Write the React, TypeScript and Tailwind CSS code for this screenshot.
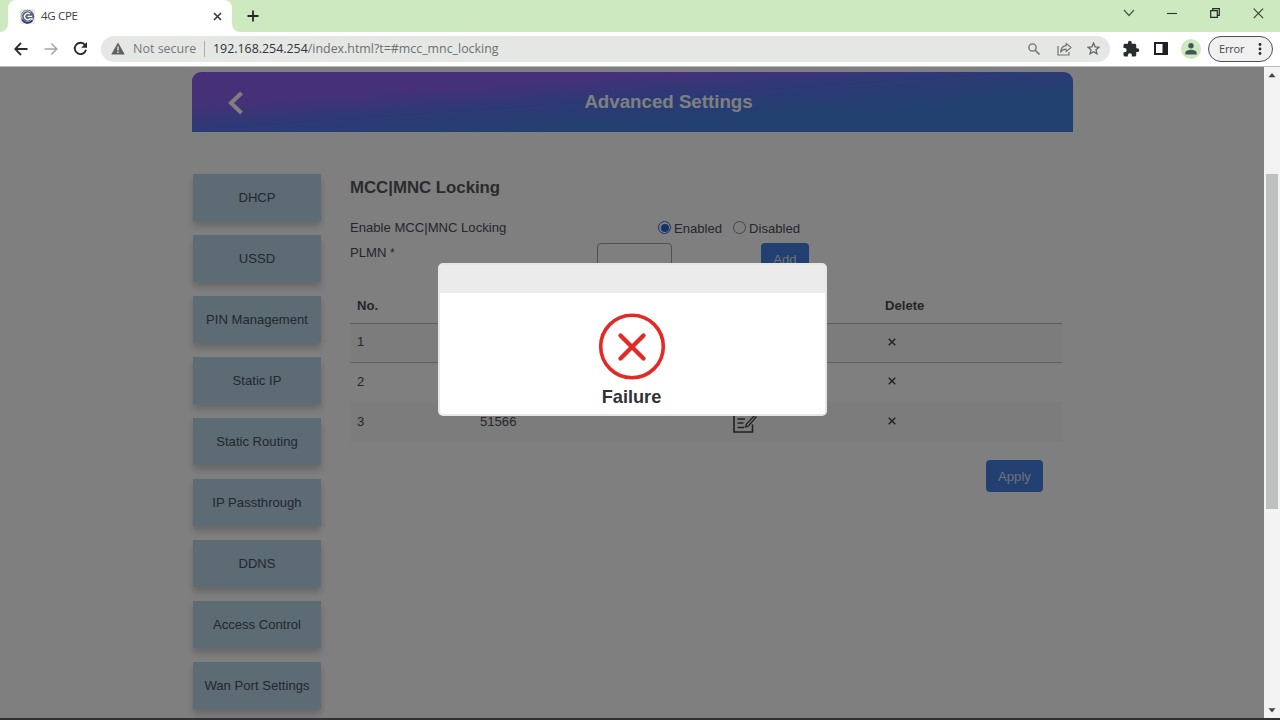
import type { ReactNode } from 'react';

// --- TYPES ---
type MenuItem = {
  label: string;
};

type PlmnRow = {
  no: number;
  plmn: string | null;
};

// --- DATA ---
const menu: MenuItem[] = [
  { label: 'DHCP' },
  { label: 'USSD' },
  { label: 'PIN Management' },
  { label: 'Static IP' },
  { label: 'Static Routing' },
  { label: 'IP Passthrough' },
  { label: 'DDNS' },
  { label: 'Access Control' },
  { label: 'Wan Port Settings' },
];

const rows: PlmnRow[] = [
  { no: 1, plmn: null },
  { no: 2, plmn: null },
  { no: 3, plmn: '51566' },
];

// --- BROWSER ---
function TabBar() {
  return (
    <div className="flex h-8 items-stretch bg-[#cce9c0]">
      <div className="flex w-2 bg-white">
        <div className="w-2 rounded-br-lg bg-[#cce9c0]" />
      </div>
      <div className="flex w-[224px] items-center rounded-t-lg bg-white pl-3 pr-[10px]">
        <svg width="15" height="15" viewBox="0 0 15 15" className="shrink-0">
          <rect width="15" height="15" rx="2" fill="#e6e8ec" />
          <circle cx="7.5" cy="7.5" r="6.7" fill="#5d677c" />
          <path d="M10.8 3.2A5.6 5.6 0 1 0 12.6 9" fill="none" stroke="#c9ced8" strokeWidth="1" />
          <path d="M9.7 5A3.2 3.2 0 1 0 10 9.8H12.5M7.5 7.3h4.6" fill="none" stroke="#ffffff" strokeWidth="1.3" />
          <path d="M2 10.5A6.2 6.2 0 0 0 12.4 11.5" fill="none" stroke="#273b70" strokeWidth="1.6" />
        </svg>
        <span className="ml-[6px] font-['Open_Sans',sans-serif] text-[11.5px] tracking-[-0.3px] text-[#3c4043]">4G CPE</span>
        <svg width="9" height="9" viewBox="0 0 9 9" className="ml-auto">
          <path d="M1 1l7 7M8 1L1 8" stroke="#3a3d40" strokeWidth="1.7" />
        </svg>
      </div>
      <div className="flex w-2 bg-white">
        <div className="w-2 rounded-bl-lg bg-[#cce9c0]" />
      </div>
      <svg width="12" height="12" viewBox="0 0 12 12" className="ml-[7px] mt-[10px]">
        <path d="M6 .5v11M.5 6h11" stroke="#26292b" strokeWidth="1.8" />
      </svg>
      <div className="ml-auto flex items-start pr-[16px] pt-[8px]">
        <svg width="12" height="10" viewBox="0 0 12 10" className="mr-[32px]">
          <path d="M1 2l5 5.5L11 2" fill="none" stroke="#4c574a" strokeWidth="1.2" />
        </svg>
        <svg width="10" height="10" viewBox="0 0 10 10" className="mr-[33px]">
          <path d="M0 5.5h10" stroke="#303530" strokeWidth="1.1" />
        </svg>
        <svg width="10" height="10" viewBox="0 0 10 10" className="mr-[33px]">
          <path d="M.7 2.7h6.6v6.6H.7zM2.7 2.5V.7h6.6v6.6H7.5" fill="none" stroke="#252a24" strokeWidth="1.2" />
        </svg>
        <svg width="11" height="11" viewBox="0 0 11 11">
          <path d="M.7.7l9.4 9.4M10.1.7L.7 10.1" stroke="#3c443a" strokeWidth="1.2" />
        </svg>
      </div>
    </div>
  );
}

function Toolbar() {
  return (
    <div className="flex h-[34px] items-center bg-white font-['Open_Sans',sans-serif]">
      <svg width="14" height="14" viewBox="0 0 14 14" className="ml-[14px]">
        <path d="M13.5 7H1.3M7 1L1.2 7 7 13" fill="none" stroke="#292c2e" strokeWidth="1.8" />
      </svg>
      <svg width="14" height="14" viewBox="0 0 14 14" className="ml-[16px]">
        <path d="M.5 7h12.2M7.4 1.4L12.8 7l-5.4 5.6" fill="none" stroke="#a2a5a6" strokeWidth="1.5" />
      </svg>
      <svg width="15" height="15" viewBox="0 0 15 15" className="mb-px ml-[15px]">
        <path d="M12.2 4.2A5.7 5.7 0 1 0 13 8.8" fill="none" stroke="#292c2e" strokeWidth="1.9" />
        <path d="M14 .9v5.8H8.2z" fill="#292c2e" />
      </svg>
      <div className="ml-[13px] flex h-[26px] w-[1009px] items-center rounded-full bg-[#e5e7e5] pl-[10px] pr-[10px]">
        <svg width="14" height="13" viewBox="0 0 14 13" className="mb-px">
          <path d="M7 .5l6.8 12H.2z" fill="#5c6263" />
          <path d="M7 4.5v4M7 9.4v1.6" stroke="#e5e7e5" strokeWidth="1.4" />
        </svg>
        <span className="ml-[8px] w-[63px] whitespace-nowrap text-[12.5px] text-[#75797a]">Not secure</span>
        <span className="ml-[8px] h-4 w-px bg-[#a9adab]" />
        <span className="ml-[8px] whitespace-nowrap text-[12.4px] text-[#6c706f]">
          <span className="text-[#303335]">192.168.254.254</span>/index.html?t=#mcc_mnc_locking
        </span>
        <div className="ml-auto flex items-center pb-px">
          <svg width="12" height="12" viewBox="0 0 12 12" className="mr-[17px]">
            <circle cx="4.5" cy="4.5" r="3.6" fill="none" stroke="#70766f" strokeWidth="1.4" />
            <path d="M7.2 7.2l4.3 4.3" stroke="#70766f" strokeWidth="1.6" />
          </svg>
          <svg width="15" height="14" viewBox="0 0 15 14" className="mr-[15px]">
            <path d="M1 4v9h11v-3" fill="none" stroke="#70766f" strokeWidth="1.2" />
            <path d="M9.2 1.4L14 5.5 9.2 9.6V7.2C6.6 7.2 5 8 3.7 10c.2-3.4 2-6 5.5-6.3z" fill="none" stroke="#70766f" strokeWidth="1.2" strokeLinejoin="round" />
          </svg>
          <svg width="13" height="13" viewBox="0 0 14 14">
            <path d="M7 1.2l1.7 4 4.3.4-3.3 2.8 1 4.3L7 10.4l-3.7 2.3 1-4.3L1 5.6l4.3-.4z" fill="none" stroke="#626762" strokeWidth="1.4" />
          </svg>
        </div>
      </div>
      <svg width="18" height="18" viewBox="0 0 24 24" className="ml-[12px]">
        <path d="M20.5 11H19V7c0-1.1-.9-2-2-2h-4V3.5a2.5 2.5 0 0 0-5 0V5H4c-1.1 0-2 .9-2 2v3.8h1.5a2.7 2.7 0 0 1 0 5.4H2V20c0 1.1.9 2 2 2h3.8v-1.5a2.7 2.7 0 0 1 5.4 0V22H17c1.1 0 2-.9 2-2v-4h1.5a2.5 2.5 0 0 0 0-5z" fill="#292c2e" />
      </svg>
      <svg width="14" height="13" viewBox="0 0 14 13" className="mb-px ml-[14px]">
        <rect x="1" y="1" width="12" height="11" fill="none" stroke="#1f2223" strokeWidth="2" />
        <rect x="8.5" y="1" width="4.5" height="11" fill="#1f2223" />
      </svg>
      <svg width="20" height="20" viewBox="0 0 20 20" className="ml-[13px]">
        <circle cx="10" cy="10" r="10" fill="#cce9c0" />
        <circle cx="10" cy="6.8" r="2.7" fill="#45545d" />
        <path d="M4.3 15.5v-1.7c0-2 3.4-3.1 5.7-3.1s5.7 1.1 5.7 3.1v1.700z" fill="#45545d" />
      </svg>
      <div className="ml-[7px] flex h-[26px] w-[65px] items-center rounded-full border-[1.5px] border-[#4c5052] bg-[#eff0ef] pl-[10px]">
        <span className="text-[11px] tracking-[-0.2px] text-[#45494b]">Error</span>
        <svg width="4" height="14" viewBox="0 0 4 14" className="ml-auto mr-[10px]">
          <circle cx="2" cy="2.5" r="1.4" fill="#292c2e" />
          <circle cx="2" cy="7" r="1.4" fill="#292c2e" />
          <circle cx="2" cy="11.5" r="1.4" fill="#292c2e" />
        </svg>
      </div>
    </div>
  );
}

function Scrollbar() {
  return (
    <div className="flex w-4 flex-col items-center bg-[#f3f3f3]">
      <svg width="8" height="5" viewBox="0 0 8 5" className="mt-[6px]">
        <path d="M4 0l3.5 4.2h-7z" fill="#454545" />
      </svg>
      <div className="mt-[96px] h-[335px] w-[12px] bg-[#bdc0be]" />
      <svg width="8" height="5" viewBox="0 0 8 5" className="mb-[5px] mt-auto">
        <path d="M4 4.5L.5.3h7z" fill="#454545" />
      </svg>
    </div>
  );
}

// --- PAGE ---
function Radio({ checked, children }: { checked?: boolean; children: ReactNode }) {
  return (
    <label className="flex items-center">
      <span
        className={
          checked
            ? 'mb-px flex size-[13px] items-center justify-center rounded-full border border-[#2a66d6] bg-white'
            : 'mb-px size-[13px] rounded-full border border-[#888888] bg-white'
        }
      >
        {checked && <span className="size-[8px] rounded-full bg-[#2a66d6]" />}
      </span>
      <span className="ml-[3px] mt-[2px]">{children}</span>
    </label>
  );
}

function EditIcon() {
  return (
    <svg width="24" height="22" viewBox="0 0 24 22" fill="none" stroke="#3f4347" strokeWidth="1.6">
      <path d="M14 3H1v18h18.5v-7.5" />
      <path d="M4.5 8H12M4.5 12h6M4.5 16.5H11" />
      <path d="M22.5 3.5l-9 9.5-1 3 3-1 8-9.5" strokeWidth="1.3" />
    </svg>
  );
}

function LockingForm() {
  return (
    <div className="ml-[29px] w-[712px]">
      <h2 className="mt-[3px] text-[16.8px] font-bold leading-[22px] text-[#55575b]">MCC|MNC Locking</h2>

      <div className="mt-[16px] flex h-[28px]">
        <div className="w-[308px] pt-[5px] leading-4">Enable MCC|MNC Locking</div>
        <div className="flex h-[26px] items-center gap-[11px] leading-4">
          <Radio checked>Enabled</Radio>
          <Radio>Disabled</Radio>
        </div>
      </div>
      <div className="flex h-[45px]">
        <div className="w-[247px] pt-[2px] leading-4">
          PLMN <span className="text-[12px]">*</span>
        </div>
        <div className="h-[32px] w-[75px] rounded-sm border border-[#a0a0a0] bg-white" />
        <button className="ml-[89px] h-[32px] w-[48px] rounded bg-[#4280e2] pt-px text-[#dfe3ea]">Add</button>
      </div>

      <table className="w-full table-fixed border-collapse text-left">
        <colgroup>
          <col className="w-[122px]" />
          <col className="w-[254px]" />
          <col className="w-[152px]" />
          <col />
        </colgroup>
        <thead>
          <tr className="h-[35px] border-b border-[#b4b6b4] text-[#4b4d51]">
            <th className="pl-[7px] pt-[2px] font-bold">No.</th>
            <th />
            <th />
            <th className="pl-[7px] pt-[2px] font-bold">Delete</th>
          </tr>
        </thead>
        <tbody>
          {rows.map((row) => (
            <tr key={row.no} className="h-[39.6px] border-b border-transparent odd:bg-[#f8f9f8] first:border-[#bec0be]">
              <td className="pb-px pl-[7px]">{row.no}</td>
              <td className="pb-px pl-[8px]">{row.plmn}</td>
              <td className="pl-[7px]">{row.plmn && <EditIcon />}</td>
              <td className="pb-[2px] pl-[10px]">
                <svg width="8" height="8" viewBox="0 0 8 8">
                  <path d="M.7.7l6.6 6.6M7.3.7L.7 7.3" stroke="#44474b" strokeWidth="1.5" />
                </svg>
              </td>
            </tr>
          ))}
        </tbody>
      </table>

      <button className="ml-[636px] mt-[18px] h-[32px] w-[57px] rounded bg-[#4280e2] pt-px text-[#dfe3ea]">Apply</button>
    </div>
  );
}

function FailureDialog() {
  return (
    <div className="absolute left-[438px] top-[196px] h-[153px] w-[389px] overflow-hidden rounded-[5px] border-2 border-[#e6e7e6] bg-white">
      <div className="h-[28px] bg-[#ebebeb]" />
      <div className="flex flex-col items-center pr-[2px]">
        <svg width="68" height="68" viewBox="0 0 68 68" className="mt-[19px]">
          <circle cx="34" cy="34.5" r="31.3" fill="none" stroke="#e32a27" strokeWidth="3.6" />
          <path d="M22.5 23.5l23 23M45.500 23.500l-23 23" stroke="#e32a27" strokeWidth="4.4" strokeLinecap="round" />
        </svg>
        <div className="mt-[5px] text-[18.2px] font-bold leading-[24px] text-[#303236]">Failure</div>
      </div>
    </div>
  );
}

export default function App() {
  return (
    <div className="flex h-[720px] w-[1280px] flex-col overflow-hidden bg-white">
      <TabBar />
      <Toolbar />
      <div className="h-px bg-[#b9bbb9]" />

      <div className="flex min-h-0 flex-1">
        <div className="relative w-[1264px] overflow-hidden bg-[#fefffe] font-['Liberation_Sans',Arial,sans-serif] text-[13.1px] text-[#4a4e5c]">
          <div className="ml-[192px] mt-[5px] w-[881px]">
            <header className="flex h-[60px] items-center rounded-t-[9px] bg-[linear-gradient(176deg,#8c62f0_0%,#8c62f0_27%,#5c72ec_46%,#4280de_70%)] text-white">
              <svg width="16" height="24" viewBox="0 0 16 24" className="ml-[36px] mt-px">
                <path d="M13.5 2L3 12l10.5 10" fill="none" stroke="#ffffff" strokeWidth="4" />
              </svg>
              <h1 className="flex-1 pl-[20px] text-center text-[18.7px] font-bold">Advanced Settings</h1>
            </header>

            <div className="flex pl-px pt-[42px]">
              <nav className="flex w-[128px] flex-col gap-[14px]">
                {menu.map((item) => (
                  <button key={item.label} className="h-[47px] bg-[#b8d6e8] text-center shadow-[0_5px_7px_rgba(0,0,0,0.2)]">
                    {item.label}
                  </button>
                ))}
              </nav>
              <LockingForm />
            </div>
          </div>

          <div className="absolute inset-0 bg-black/50" />
          <FailureDialog />
        </div>
        <Scrollbar />
      </div>

      <div className="h-[2px] bg-[#303035]" />
    </div>
  );
}
